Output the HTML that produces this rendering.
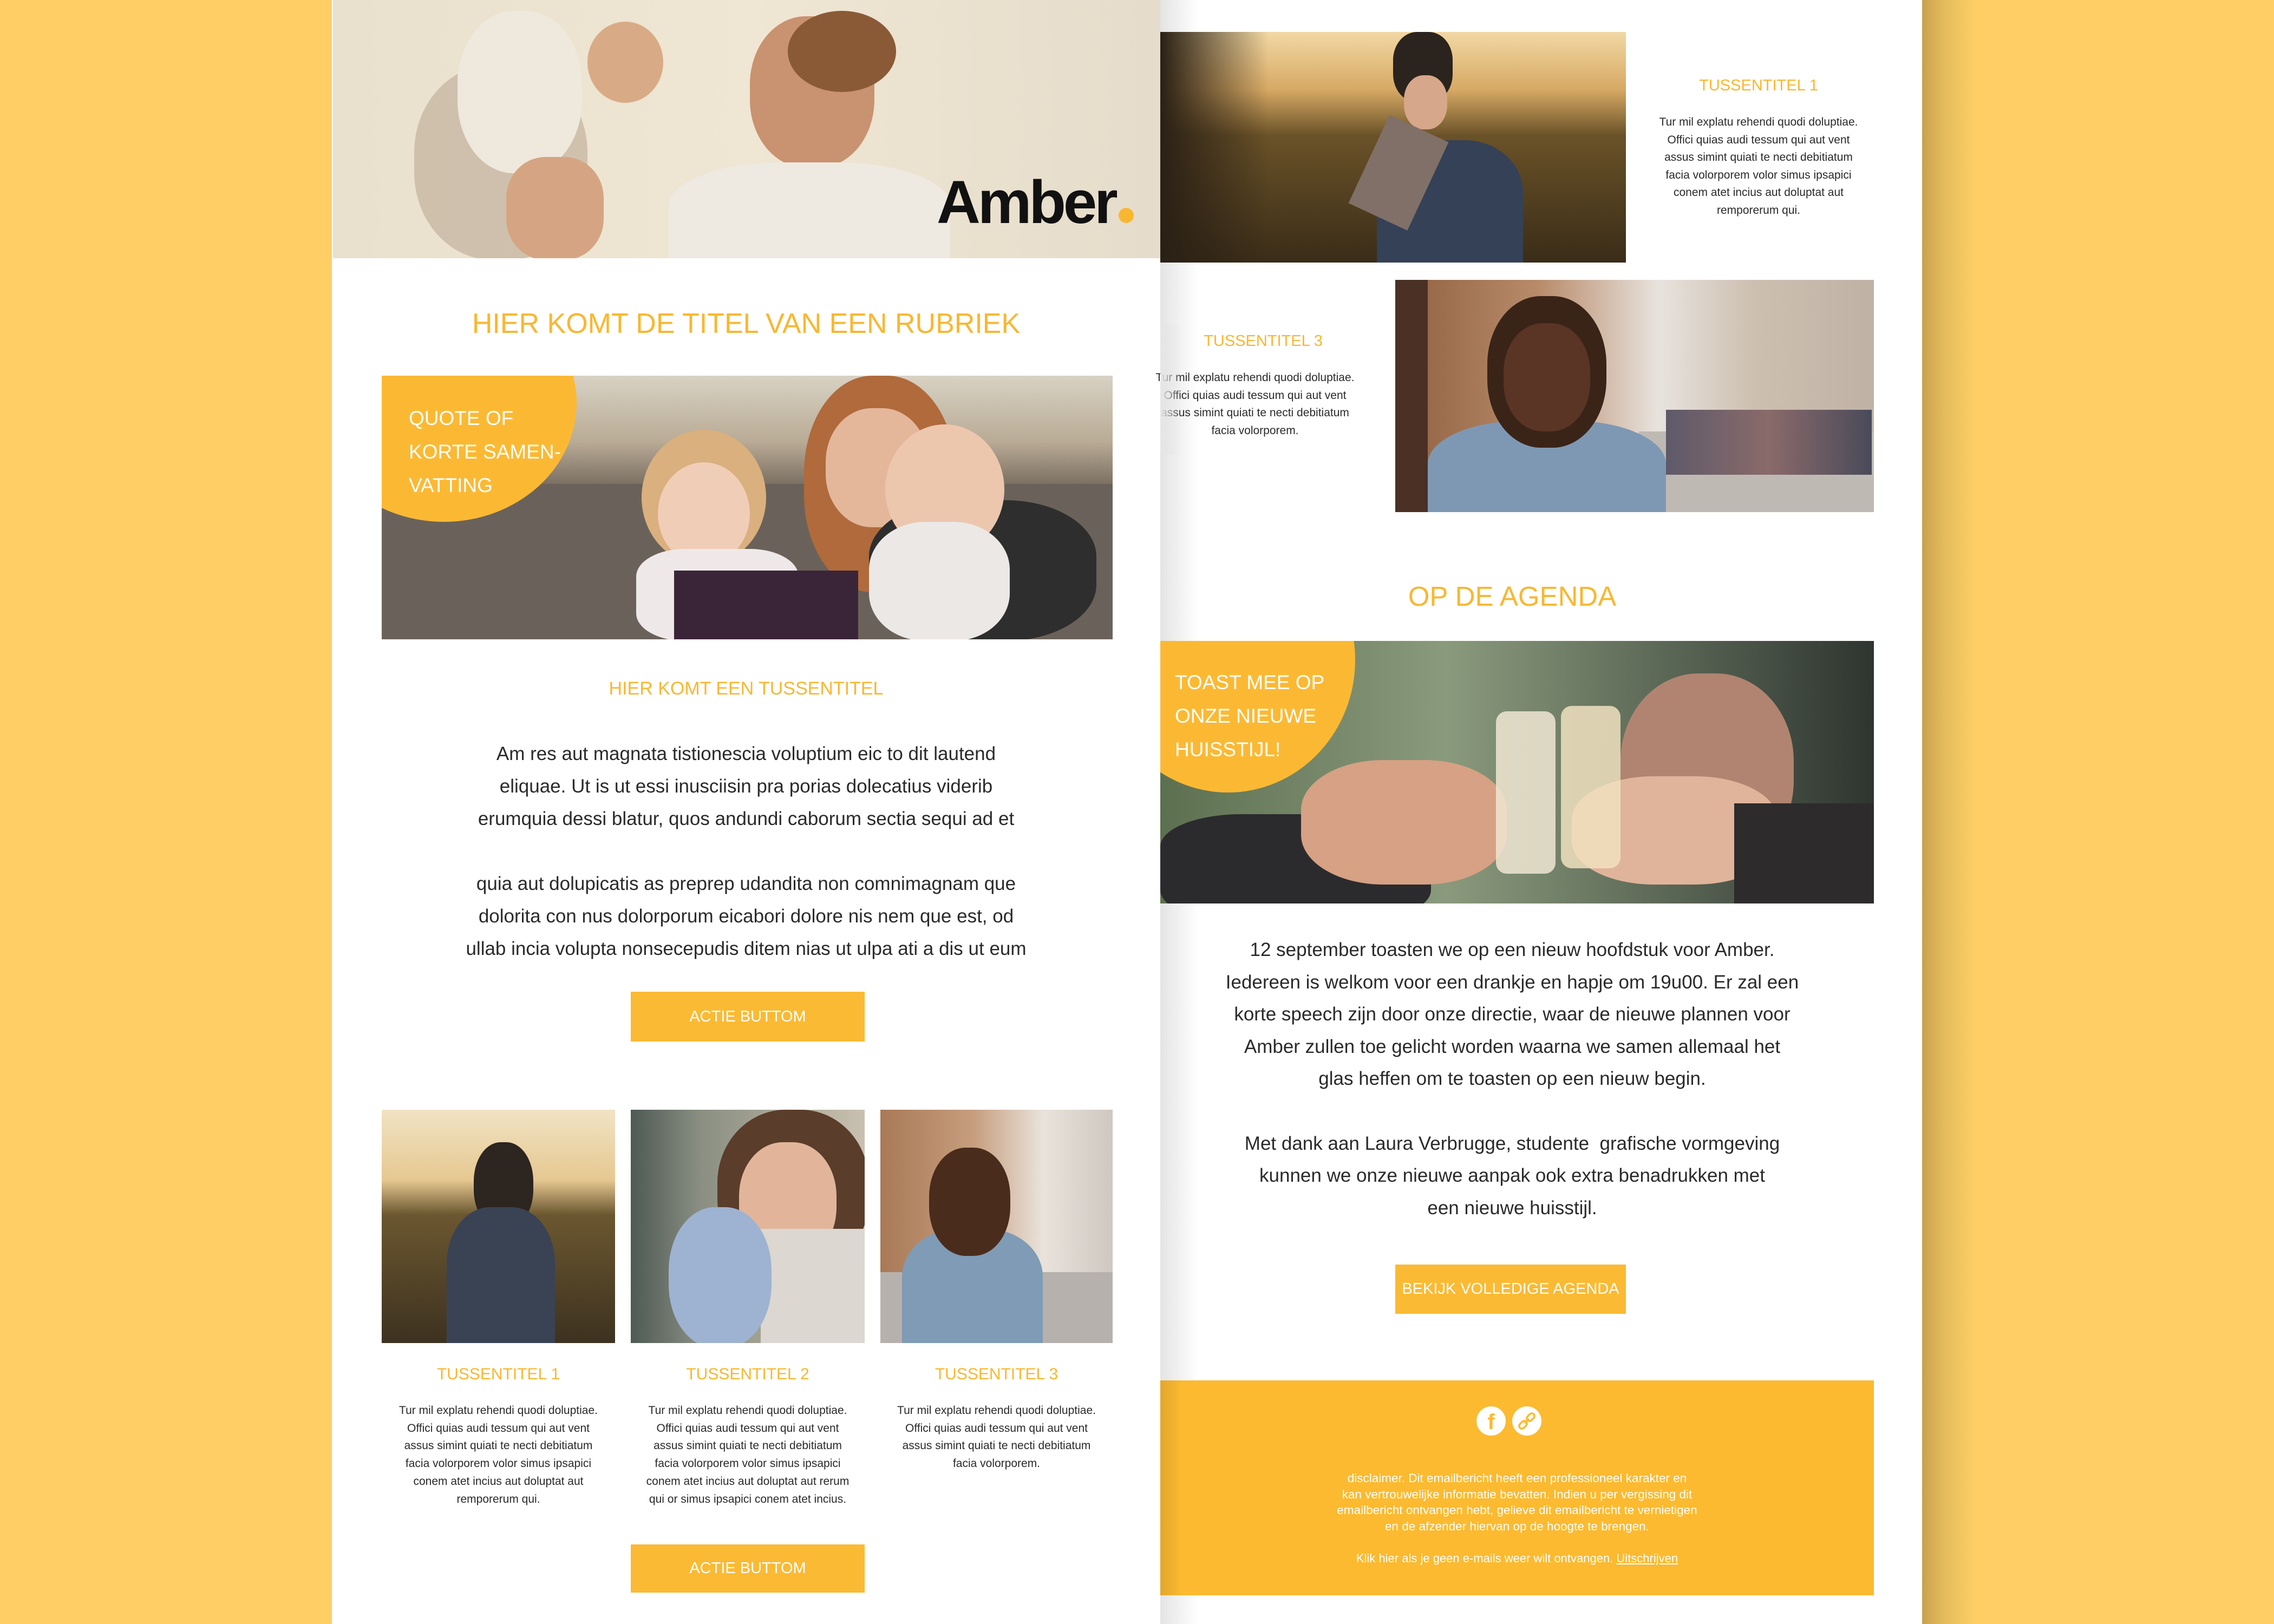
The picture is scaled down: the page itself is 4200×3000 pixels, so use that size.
<!DOCTYPE html>
<html><head><meta charset="utf-8"><style>
*{margin:0;padding:0;box-sizing:border-box}
body{width:4200px;height:3000px;background:#FFCF66;position:relative;overflow:hidden;font-family:"Liberation Sans",sans-serif;}
.a{position:absolute}
.pg{background:#fff}
.c{text-align:center;white-space:nowrap}
.y{color:#F9B730}
.t{color:#2a2a2a}
.btn{background:#FBBA33;color:#fff;text-align:center;font-size:29px}
.ph{overflow:hidden}
</style></head><body>
<div class="a" style="left:3550px;top:0;width:100px;height:3000px;background:linear-gradient(90deg,#c9a14e,#e3bb5c 40%,#FFCF66)"></div>
<div class="a pg" style="left:613px;top:0;width:1530px;height:3000px"></div>
<div class="a pg" style="left:2143px;top:0;width:1407px;height:3000px;background:linear-gradient(90deg,#e4e4e4,#fff 70px)"></div>

<div class="a ph" style="left:615px;top:0;width:1528px;height:477px;background:linear-gradient(90deg,#e9e0cd,#efe6d3 50%,#e6dccb)">
  <div class="a" style="left:150px;top:120px;width:320px;height:360px;border-radius:45%;background:#c8b8a4;opacity:.8"></div>
  <div class="a" style="left:230px;top:20px;width:230px;height:300px;border-radius:45%;background:#efe8dc"></div>
  <div class="a" style="left:470px;top:40px;width:140px;height:150px;border-radius:50%;background:#d8ab86"></div>
  <div class="a" style="left:770px;top:30px;width:230px;height:280px;border-radius:45%;background:#c99270"></div>
  <div class="a" style="left:840px;top:20px;width:200px;height:150px;border-radius:50%;background:#8a5a36"></div>
  <div class="a" style="left:620px;top:300px;width:520px;height:200px;border-radius:40% 40% 0 0;background:#eeeae2"></div>
  <div class="a" style="left:320px;top:290px;width:180px;height:190px;border-radius:40%;background:#d5a583"></div>
  <div class="a" style="left:1115px;top:318px;font-size:112px;font-weight:bold;color:#111;letter-spacing:-5px;line-height:1">Amber<span style="display:inline-block;width:28px;height:28px;border-radius:50%;background:#F9B730;margin-left:6px"></span></div>
</div>

<div class="a c y" style="left:613px;top:568px;width:1530px;font-size:52px">HIER KOMT DE TITEL VAN EEN RUBRIEK</div>

<div class="a ph" style="left:705px;top:694px;width:1350px;height:487px;background:linear-gradient(180deg,#d8d2c4 0%,#b9ab95 25%,#6d6258 45%,#4f4841 100%)">
  <div class="a" style="left:0;top:200px;width:1350px;height:290px;background:#6a625a"></div>
  <div class="a" style="left:780px;top:0;width:280px;height:400px;border-radius:45%;background:#b06a3c"></div>
  <div class="a" style="left:820px;top:60px;width:190px;height:220px;border-radius:45%;background:#e4b79b"></div>
  <div class="a" style="left:900px;top:230px;width:420px;height:260px;border-radius:40%;background:#2e2e2e"></div>
  <div class="a" style="left:930px;top:90px;width:220px;height:240px;border-radius:50%;background:#ecc7ae"></div>
  <div class="a" style="left:900px;top:270px;width:260px;height:220px;border-radius:40%;background:#ece8e6"></div>
  <div class="a" style="left:480px;top:100px;width:230px;height:250px;border-radius:50%;background:#d9b07e"></div>
  <div class="a" style="left:510px;top:160px;width:170px;height:190px;border-radius:50%;background:#f0cdb6"></div>
  <div class="a" style="left:470px;top:320px;width:300px;height:170px;border-radius:30%;background:#efe8e8"></div>
  <div class="a" style="left:540px;top:360px;width:340px;height:130px;background:#3a2538"></div>
  <div class="a" style="left:-130px;top:-170px;width:490px;height:440px;border-radius:50%;background:#FBB933"></div>
  <div class="a" style="left:50px;top:48px;font-size:37px;line-height:62px;color:#fff">QUOTE OF<br>KORTE SAMEN-<br>VATTING</div>
</div>

<div class="a c y" style="left:613px;top:1253px;width:1530px;font-size:34px">HIER KOMT EEN TUSSENTITEL</div>
<div class="a c t" style="left:613px;top:1363px;width:1530px;font-size:35px;line-height:60px">Am res aut magnata tistionescia voluptium eic to dit lautend<br>eliquae. Ut is ut essi inusciisin pra porias dolecatius viderib<br>erumquia dessi blatur, quos andundi caborum sectia sequi ad et<br><br>quia aut dolupicatis as preprep udandita non comnimagnam que<br>dolorita con nus dolorporum eicabori dolore nis nem que est, od<br>ullab incia volupta nonsecepudis ditem nias ut ulpa ati a dis ut eum</div>
<div class="a btn" style="left:1165px;top:1832px;width:432px;height:92px;line-height:92px">ACTIE BUTTOM</div>

<div class="a ph" style="left:705px;top:2050px;width:431px;height:431px;background:linear-gradient(180deg,#f1e3c4 0%,#e6c891 30%,#6b5730 45%,#3d3220 100%)">
  <div class="a" style="left:170px;top:60px;width:110px;height:160px;border-radius:45%;background:#2d2520"></div>
  <div class="a" style="left:120px;top:180px;width:200px;height:260px;border-radius:40% 40% 0 0;background:#394354"></div>
</div>
<div class="a ph" style="left:1165px;top:2050px;width:432px;height:431px;background:linear-gradient(90deg,#4e5a55,#8a8f82 30%,#c9c0b0)">
  <div class="a" style="left:160px;top:0;width:280px;height:300px;border-radius:45%;background:#5a3d2a"></div>
  <div class="a" style="left:200px;top:60px;width:180px;height:220px;border-radius:45%;background:#e2b59a"></div>
  <div class="a" style="left:240px;top:220px;width:220px;height:230px;background:#dcd7d0"></div>
  <div class="a" style="left:70px;top:180px;width:190px;height:260px;border-radius:45%;background:#9db3d1"></div>
</div>
<div class="a ph" style="left:1626px;top:2050px;width:429px;height:431px;background:linear-gradient(90deg,#a87956 0%,#c69e7e 40%,#e9e3dc 70%,#cfc7c0)">
  <div class="a" style="left:0;top:300px;width:429px;height:131px;background:#b7b1ad"></div>
  <div class="a" style="left:40px;top:220px;width:260px;height:220px;border-radius:40% 40% 0 0;background:#7f9bb5"></div>
  <div class="a" style="left:90px;top:70px;width:150px;height:200px;border-radius:45%;background:#4a2c1c"></div>
</div>
<div class="a c y" style="left:705px;top:2522px;width:431px;font-size:30px">TUSSENTITEL 1</div>
<div class="a c y" style="left:1165px;top:2522px;width:432px;font-size:30px">TUSSENTITEL 2</div>
<div class="a c y" style="left:1626px;top:2522px;width:429px;font-size:30px">TUSSENTITEL 3</div>
<div class="a c t" style="left:695px;top:2590px;width:451px;font-size:21px;line-height:32.7px">Tur mil explatu rehendi quodi doluptiae.<br>Offici quias audi tessum qui aut vent<br>assus simint quiati te necti debitiatum<br>facia volorporem volor simus ipsapici<br>conem atet incius aut doluptat aut<br>remporerum qui.</div>
<div class="a c t" style="left:1155px;top:2590px;width:452px;font-size:21px;line-height:32.7px">Tur mil explatu rehendi quodi doluptiae.<br>Offici quias audi tessum qui aut vent<br>assus simint quiati te necti debitiatum<br>facia volorporem volor simus ipsapici<br>conem atet incius aut doluptat aut rerum<br>qui or simus ipsapici conem atet incius.</div>
<div class="a c t" style="left:1616px;top:2590px;width:449px;font-size:21px;line-height:32.7px">Tur mil explatu rehendi quodi doluptiae.<br>Offici quias audi tessum qui aut vent<br>assus simint quiati te necti debitiatum<br>facia volorporem.</div>
<div class="a btn" style="left:1165px;top:2853px;width:432px;height:89px;line-height:89px">ACTIE BUTTOM</div>

<div class="a ph" style="left:2143px;top:59px;width:860px;height:426px;background:linear-gradient(180deg,#f2d8a4 0%,#d7a964 25%,#6a5228 45%,#3a2c18 100%)">
  <div class="a" style="left:0;top:0;width:200px;height:426px;background:linear-gradient(90deg,#2a2015,transparent)"></div>
  <div class="a" style="left:430px;top:0;width:110px;height:130px;border-radius:40%;background:#2b231d"></div>
  <div class="a" style="left:450px;top:80px;width:80px;height:100px;border-radius:45%;background:#d6a78a"></div>
  <div class="a" style="left:400px;top:200px;width:270px;height:240px;border-radius:40% 40% 0 0;background:#344157"></div>
  <div class="a" style="left:380px;top:170px;width:120px;height:180px;background:#807068;transform:rotate(25deg)"></div>
</div>
<div class="a c y" style="left:3003px;top:142px;width:490px;font-size:29px">TUSSENTITEL 1</div>
<div class="a c t" style="left:3003px;top:210px;width:490px;font-size:21px;line-height:32.5px">Tur mil explatu rehendi quodi doluptiae.<br>Offici quias audi tessum qui aut vent<br>assus simint quiati te necti debitiatum<br>facia volorporem volor simus ipsapici<br>conem atet incius aut doluptat aut<br>remporerum qui.</div>

<div class="a c y" style="left:2143px;top:614px;width:380px;font-size:29px">TUSSENTITEL 3</div>
<div class="a c t" style="left:2098px;top:682px;width:440px;font-size:21px;line-height:32.5px">Tur mil explatu rehendi quodi doluptiae.<br>Offici quias audi tessum qui aut vent<br>assus simint quiati te necti debitiatum<br>facia volorporem.</div>
<div class="a" style="left:2143px;top:600px;width:40px;height:240px;background:linear-gradient(90deg,#e6e6e6,rgba(255,255,255,0))"></div>
<div class="a ph" style="left:2577px;top:517px;width:884px;height:429px;background:linear-gradient(90deg,#8f6040 0%,#b88b6a 30%,#e8e3de 55%,#cdbfb0 75%,#bfb2a5)">
  <div class="a" style="left:0;top:0;width:60px;height:429px;background:#4a3025"></div>
  <div class="a" style="left:450px;top:280px;width:434px;height:149px;background:#bfb9b4"></div>
  <div class="a" style="left:500px;top:240px;width:380px;height:120px;background:linear-gradient(90deg,#5e5a6a,#8a6a6a,#4a4a5a)"></div>
  <div class="a" style="left:60px;top:260px;width:440px;height:200px;border-radius:40% 40% 0 0;background:#7e98b4"></div>
  <div class="a" style="left:170px;top:30px;width:220px;height:280px;border-radius:45%;background:#3a2418"></div>
  <div class="a" style="left:200px;top:80px;width:160px;height:200px;border-radius:45%;background:#5a3424"></div>
</div>

<div class="a c y" style="left:2143px;top:1072px;width:1300px;font-size:51px">OP DE AGENDA</div>
<div class="a ph" style="left:2143px;top:1184px;width:1318px;height:485px;background:linear-gradient(90deg,#5c7050,#8a9a7c 40%,#6c7a64 60%,#2e3530)">
  <div class="a" style="left:850px;top:60px;width:320px;height:360px;border-radius:45%;background:#b08470"></div>
  <div class="a" style="left:0;top:320px;width:500px;height:200px;border-radius:30%;background:#2b2b2e"></div>
  <div class="a" style="left:260px;top:220px;width:380px;height:230px;border-radius:40%;background:#d6a184"></div>
  <div class="a" style="left:760px;top:250px;width:380px;height:200px;border-radius:40%;background:#e0b49a"></div>
  <div class="a" style="left:1060px;top:300px;width:300px;height:200px;background:#2d2b2c"></div>
  <div class="a" style="left:620px;top:130px;width:110px;height:300px;border-radius:20px;background:rgba(240,230,210,.85)"></div>
  <div class="a" style="left:740px;top:120px;width:110px;height:300px;border-radius:20px;background:rgba(240,225,190,.85)"></div>
  <div class="a" style="left:-110px;top:-210px;width:470px;height:490px;border-radius:50%;background:#FBB933"></div>
  <div class="a" style="left:27px;top:46px;font-size:37px;line-height:62px;color:#fff">TOAST MEE OP<br>ONZE NIEUWE<br>HUISSTIJL!</div>
</div>

<div class="a c t" style="left:2143px;top:1725px;width:1300px;font-size:35px;line-height:59.6px">12 september toasten we op een nieuw hoofdstuk voor Amber.<br>Iedereen is welkom voor een drankje en hapje om 19u00. Er zal een<br>korte speech zijn door onze directie, waar de nieuwe plannen voor<br>Amber zullen toe gelicht worden waarna we samen allemaal het<br>glas heffen om te toasten op een nieuw begin.<br><br>Met dank aan Laura Verbrugge, studente&nbsp; grafische vormgeving<br>kunnen we onze nieuwe aanpak ook extra benadrukken met<br>een nieuwe huisstijl.</div>
<div class="a btn" style="left:2577px;top:2336px;width:426px;height:91px;line-height:91px">BEKIJK VOLLEDIGE AGENDA</div>

<div class="a" style="left:2143px;top:2550px;width:1318px;height:397px;background:linear-gradient(90deg,#e3a62c,#FBBA30 40px)">
  <div class="a" style="left:584px;top:48px;width:54px;height:54px;border-radius:50%;background:#fff;color:#FBBA30;font-size:40px;font-weight:bold;text-align:center;line-height:58px">f</div>
  <div class="a" style="left:650px;top:48px;width:54px;height:54px;border-radius:50%;background:#fff">
    <svg width="54" height="54" viewBox="0 0 54 54"><g fill="none" stroke="#FBBA30" stroke-width="3.5"><rect x="15" y="26" width="10" height="16" rx="5" transform="rotate(45 20 34)"/><rect x="29" y="12" width="10" height="16" rx="5" transform="rotate(45 34 20)"/><line x1="23" y1="31" x2="31" y2="23"/></g></svg>
  </div>
  <div class="a c" style="left:0;top:166px;width:1318px;font-size:22.5px;line-height:29.5px;color:#fff">disclaimer. Dit emailbericht heeft een professioneel karakter en<br>kan vertrouwelijke informatie bevatten. Indien u per vergissing dit<br>emailbericht ontvangen hebt, gelieve dit emailbericht te vernietigen<br>en de afzender hiervan op de hoogte te brengen.</div>
  <div class="a c" style="left:0;top:316px;width:1318px;font-size:22px;color:#fff">Klik hier als je geen e-mails weer wilt ontvangen. <u>Uitschrijven</u></div>
</div>
</body></html>
